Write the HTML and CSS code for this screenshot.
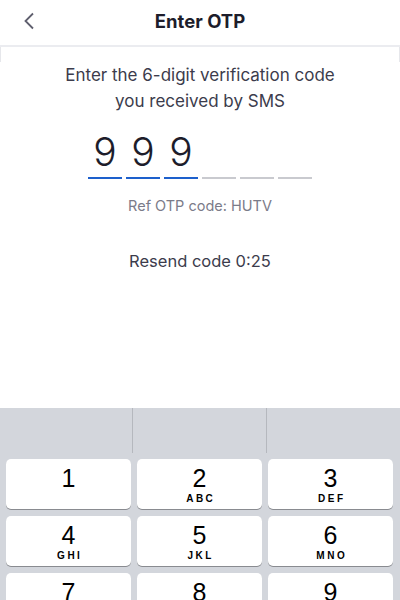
FILE: index.html
```html
<!DOCTYPE html>
<html lang="en">
<head>
    <meta charset="UTF-8">
    <title>Enter OTP</title>
    <link rel="stylesheet" href="styles.css">
</head>
<body>
<div class="screen">
    <div class="header">
        <a class="back" href="#">
            <svg width="12" height="18" viewBox="0 0 12 18"><path d="M10 1.5 L2.5 9 L10 16.5" fill="none" stroke="#5f5f6e" stroke-width="1.8"/></svg>
        </a>
        <h1 class="title">Enter OTP</h1>
    </div>
    <div class="content">
        <div class="edge"></div>
        <p class="lead">Enter the 6-digit verification code<br>you received by SMS</p>
        <div class="otp">
            <div class="cell filled">9</div>
            <div class="cell filled">9</div>
            <div class="cell filled">9</div>
            <div class="cell"></div>
            <div class="cell"></div>
            <div class="cell"></div>
        </div>
        <p class="ref">Ref OTP code: HUTV</p>
        <p class="resend">Resend code 0:25</p>
    </div>
    <div class="keyboard">
        <div class="bar">
            <span></span><span></span><span></span>
        </div>
        <div class="keys">
            <div class="key"><b>1</b><i></i></div>
            <div class="key"><b>2</b><i>ABC</i></div>
            <div class="key"><b>3</b><i>DEF</i></div>
            <div class="key"><b>4</b><i>GHI</i></div>
            <div class="key"><b>5</b><i>JKL</i></div>
            <div class="key"><b>6</b><i>MNO</i></div>
            <div class="key"><b>7</b><i>PQRS</i></div>
            <div class="key"><b>8</b><i>TUV</i></div>
            <div class="key"><b>9</b><i>WXYZ</i></div>
        </div>
    </div>
</div>
</body>
</html>
```

FILE: styles.css
```css
* {
    margin: 0;
    padding: 0;
    box-sizing: border-box;
}
body {
    background-color: #fff;
    font-family: Inter, "Noto Sans", sans-serif;
    overflow: hidden;
}
.screen {
    display: flex;
    flex-direction: column;
    width: 400px;
    height: 600px;
}
.header {
    position: relative;
    height: 47px;
    border-bottom: 2px solid #ebecf0;
    display: flex;
    align-items: center;
    justify-content: center;
}
.back {
    position: absolute;
    left: 23px;
    top: 12px;
    display: block;
    line-height: 0;
}
.title {
    font-size: 18.5px;
    font-weight: 700;
    color: #1d1d2b;
    margin-top: -4px;
}
.content {
    flex: 1;
    text-align: center;
}
.edge {
    height: 15px;
    border-left: 1px solid #e6e7eb;
    border-right: 1px solid #e6e7eb;
}
.lead {
    font-size: 17px;
    line-height: 26px;
    color: #3c3c4c;
}
.otp {
    display: flex;
    justify-content: center;
    gap: 4px;
    margin-top: 17px;
}
.cell {
    width: 34px;
    height: 48px;
    border-bottom: 2px solid #c9cacf;
    font-size: 39px;
    font-weight: 300;
    line-height: 42px;
    color: #1d1d2b;
}
.cell.filled {
    border-bottom-color: #1d60cc;
}
.ref {
    margin-top: 18px;
    font-size: 14.5px;
    color: #7b7b89;
}
.resend {
    margin-top: 37px;
    font-size: 16.5px;
    color: #3c3c4c;
}
.keyboard {
    height: 192px;
    background-color: #d3d6dc;
}
.bar {
    display: grid;
    grid-template-columns: 133px 134px 1fr;
    height: 45px;
}
.bar span {
    border-right: 1px solid #b5b8be;
}
.bar span:last-child {
    border-right: none;
}
.keys {
    display: grid;
    grid-template-columns: repeat(3, 125px);
    grid-auto-rows: 50px;
    gap: 7px 6px;
    padding: 6px 0 0 6px;
}
.key {
    background-color: #fff;
    border-radius: 5px;
    box-shadow: 0 1px 0 #898b90;
    display: flex;
    flex-direction: column;
    align-items: center;
    font-family: "Liberation Sans", Arial, sans-serif;
    color: #000;
}
.key b {
    font-weight: 400;
    font-size: 25px;
    line-height: 25px;
    margin-top: 7px;
}
.key i {
    font-style: normal;
    font-weight: 700;
    font-size: 10px;
    letter-spacing: 2.5px;
    margin-left: 2.5px;
    margin-top: 2px;
}
```
